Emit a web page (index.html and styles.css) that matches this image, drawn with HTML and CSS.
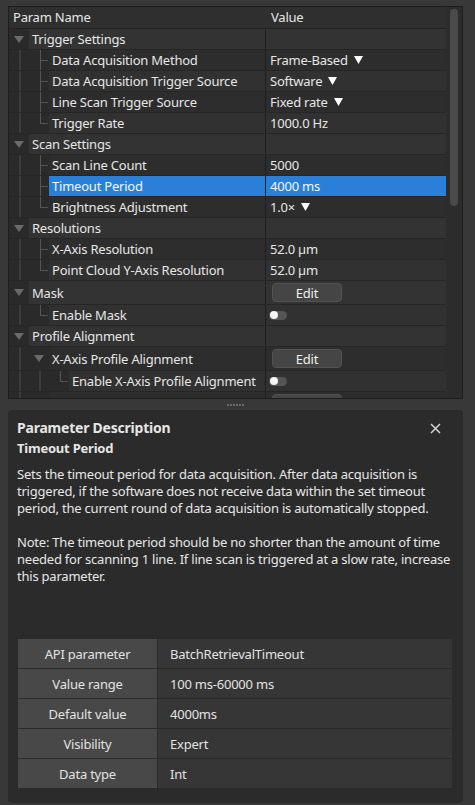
FILE: index.html
```html
<!DOCTYPE html>
<html>
<head>
<meta charset="utf-8">
<link rel="stylesheet" href="styles.css">
</head>
<body>
<div class="app">
  <div class="tree-frame">
    <div class="tree">
      <div class="hdr">
        <div class="hname">Param Name</div>
        <div class="hval">Value</div>
      </div>

      <div class="row parent">
        <div class="name"><span class="br arrow"><svg width="10" height="7" viewBox="0 0 10 7"><polygon points="0,0 10,0 5,7" fill="#6a6a6a"/></svg></span><span class="label">Trigger Settings</span></div>
        <div class="val"></div>
      </div>
      <div class="row child a">
        <div class="name"><span class="br line"></span><span class="br tee"></span><span class="label">Data Acquisition Method</span></div>
        <div class="val">Frame-Based<svg class="dd" width="9" height="8" viewBox="0 0 9 8"><polygon points="0,0 9,0 4.5,8" fill="#fff"/></svg></div>
      </div>
      <div class="row child b">
        <div class="name"><span class="br line"></span><span class="br tee"></span><span class="label">Data Acquisition Trigger Source</span></div>
        <div class="val">Software<svg class="dd" width="9" height="8" viewBox="0 0 9 8"><polygon points="0,0 9,0 4.5,8" fill="#fff"/></svg></div>
      </div>
      <div class="row child a">
        <div class="name"><span class="br line"></span><span class="br tee"></span><span class="label">Line Scan Trigger Source</span></div>
        <div class="val">Fixed rate<svg class="dd" width="9" height="8" viewBox="0 0 9 8"><polygon points="0,0 9,0 4.5,8" fill="#fff"/></svg></div>
      </div>
      <div class="row child b">
        <div class="name"><span class="br line"></span><span class="br corner"></span><span class="label">Trigger Rate</span></div>
        <div class="val">1000.0 Hz</div>
      </div>

      <div class="row parent">
        <div class="name"><span class="br arrow"><svg width="10" height="7" viewBox="0 0 10 7"><polygon points="0,0 10,0 5,7" fill="#6a6a6a"/></svg></span><span class="label">Scan Settings</span></div>
        <div class="val"></div>
      </div>
      <div class="row child a">
        <div class="name"><span class="br line"></span><span class="br tee"></span><span class="label">Scan Line Count</span></div>
        <div class="val">5000</div>
      </div>
      <div class="row child sel">
        <div class="name"><span class="br line"></span><span class="br tee"></span><span class="label">Timeout Period</span></div>
        <div class="val">4000 ms</div>
      </div>
      <div class="row child a">
        <div class="name"><span class="br line"></span><span class="br corner"></span><span class="label">Brightness Adjustment</span></div>
        <div class="val">1.0×<svg class="dd" width="9" height="8" viewBox="0 0 9 8"><polygon points="0,0 9,0 4.5,8" fill="#fff"/></svg></div>
      </div>

      <div class="row parent">
        <div class="name"><span class="br arrow"><svg width="10" height="7" viewBox="0 0 10 7"><polygon points="0,0 10,0 5,7" fill="#6a6a6a"/></svg></span><span class="label">Resolutions</span></div>
        <div class="val"></div>
      </div>
      <div class="row child a">
        <div class="name"><span class="br line"></span><span class="br tee"></span><span class="label">X-Axis Resolution</span></div>
        <div class="val">52.0 µm</div>
      </div>
      <div class="row child b">
        <div class="name"><span class="br line"></span><span class="br corner"></span><span class="label">Point Cloud Y-Axis Resolution</span></div>
        <div class="val">52.0 µm</div>
      </div>

      <div class="row parent tall">
        <div class="name"><span class="br arrow"><svg width="10" height="7" viewBox="0 0 10 7"><polygon points="0,0 10,0 5,7" fill="#6a6a6a"/></svg></span><span class="label">Mask</span></div>
        <div class="val"><span class="btn">Edit</span></div>
      </div>
      <div class="row child b">
        <div class="name"><span class="br line"></span><span class="br corner"></span><span class="label">Enable Mask</span></div>
        <div class="val"><span class="toggle"><span class="knob"></span></span></div>
      </div>

      <div class="row parent">
        <div class="name"><span class="br arrow"><svg width="10" height="7" viewBox="0 0 10 7"><polygon points="0,0 10,0 5,7" fill="#6a6a6a"/></svg></span><span class="label">Profile Alignment</span></div>
        <div class="val"></div>
      </div>
      <div class="row child a tall">
        <div class="name"><span class="br line"></span><span class="br arrow"><svg width="10" height="7" viewBox="0 0 10 7"><polygon points="0,0 10,0 5,7" fill="#6a6a6a"/></svg></span><span class="label">X-Axis Profile Alignment</span></div>
        <div class="val"><span class="btn">Edit</span></div>
      </div>
      <div class="row child b">
        <div class="name"><span class="br line"></span><span class="br line"></span><span class="br corner"></span><span class="label">Enable X-Axis Profile Alignment</span></div>
        <div class="val"><span class="toggle"><span class="knob"></span></span></div>
      </div>
      <div class="row child a tall">
        <div class="name"><span class="br line"></span><span class="br arrow"><svg width="10" height="7" viewBox="0 0 10 7"><polygon points="0,0 10,0 5,7" fill="#6a6a6a"/></svg></span><span class="label">Y-Axis Profile Alignment</span></div>
        <div class="val"><span class="btn">Edit</span></div>
      </div>
    </div>
    <div class="scrollbar"><div class="thumb"></div></div>
  </div>

  <div class="splitter"><span class="grip"></span></div>

  <div class="desc">
    <div class="desc-head">
      <span class="desc-title">Parameter Description</span>
      <svg class="close" width="11" height="11" viewBox="0 0 11 11"><path d="M1 1 L10 10 M10 1 L1 10" stroke="#d4d4d4" stroke-width="1.5" fill="none"/></svg>
    </div>
    <div class="desc-sub">Timeout Period</div>
    <p class="desc-text">Sets the timeout period for data acquisition. After data acquisition is triggered, if the software does not receive data within the set timeout period, the current round of data acquisition is automatically stopped.</p>
    <p class="desc-text">Note: The timeout period should be no shorter than the amount of time needed for scanning 1 line. If line scan is triggered at a slow rate, increase this parameter.</p>

    <div class="info">
      <div class="k">API parameter</div><div class="v">BatchRetrievalTimeout</div>
      <div class="k">Value range</div><div class="v">100 ms-60000 ms</div>
      <div class="k">Default value</div><div class="v">4000ms</div>
      <div class="k">Visibility</div><div class="v">Expert</div>
      <div class="k">Data type</div><div class="v">Int</div>
    </div>
  </div>
</div>
</body>
</html>
```

FILE: styles.css
```css
html, body {
  margin: 0;
  padding: 0;
  background: #383838;
}
body {
  font-family: "Noto Sans", "Open Sans", sans-serif;
  font-size: 13px;
  letter-spacing: -0.22px;
  color: #e6e6e6;
}
.app {
  box-sizing: border-box;
  width: 475px;
  height: 805px;
  padding: 6px 12px 2px 8px;
  display: flex;
  flex-direction: column;
}
.tree-frame {
  flex: none;
  height: 393px;
  box-sizing: border-box;
  border: 1px solid #1d1d1d;
  display: flex;
  background: #2a2a2a;
}
.tree {
  flex: 1;
  overflow: hidden;
  display: flex;
  flex-direction: column;
}
.hdr {
  flex: none;
  display: grid;
  grid-template-columns: 257px 1fr;
  height: 22px;
  box-sizing: border-box;
  border-bottom: 1px solid #222;
  background: #2f2f2f;
  line-height: 21px;
}
.hname { padding-left: 4px; }
.hval { padding-left: 5px; }

.row {
  flex: none;
  display: grid;
  grid-template-columns: 257px 1fr;
  height: 21px;
  box-sizing: border-box;
  border-bottom: 1px solid #262626;
}
.row.tall { height: 24px; }
.name {
  display: flex;
  box-sizing: border-box;
  border-right: 1px solid #1f1f1f;
  background: #2a2a2a;
  min-width: 0;
}
.label {
  flex: 1;
  padding-left: 3px;
  white-space: nowrap;
  overflow: hidden;
  display: flex;
  align-items: center;
}
.val {
  padding-left: 4px;
  display: flex;
  align-items: center;
  white-space: nowrap;
}
.parent .label, .parent .val { background: #333333; }
.child.a .label, .child.a .val { background: #2d2d2d; }
.child.b .label, .child.b .val { background: #313131; }
.child.sel .label, .child.sel .val { background: #2a80d8; color: #f2f6fb; }

.br {
  flex: none;
  width: 20px;
  height: 100%;
}
.br.arrow {
  display: flex;
  align-items: center;
  justify-content: center;
}
.br.line {
  background: linear-gradient(#3c3c3c, #3c3c3c) 10px 0 / 2px 100% no-repeat;
}
.br.tee {
  background:
    linear-gradient(#555, #555) 11px 0 / 1px 100% no-repeat,
    linear-gradient(#555, #555) 11px 10px / 8px 1px no-repeat;
}
.br.corner {
  background:
    linear-gradient(#555, #555) 11px 0 / 1px 11px no-repeat,
    linear-gradient(#555, #555) 11px 10px / 8px 1px no-repeat;
}
.dd { margin-left: 6px; }

.btn {
  margin-left: 2px;
  width: 70px;
  height: 19px;
  box-sizing: border-box;
  border: 1px solid #535353;
  border-radius: 4px;
  background: #454545;
  display: flex;
  align-items: center;
  justify-content: center;
  color: #eee;
}
.toggle {
  margin-left: -1px;
  width: 18px;
  height: 9px;
  border-radius: 5px;
  background: #555;
  display: flex;
  align-items: center;
  padding-left: 1px;
  box-sizing: border-box;
}
.knob {
  width: 8px;
  height: 8px;
  border-radius: 50%;
  background: #f4f4f4;
}

.scrollbar {
  flex: none;
  width: 16px;
  background: #2c2c2c;
  padding: 2px 4px 0 4px;
  box-sizing: border-box;
}
.thumb {
  width: 8px;
  height: 197px;
  border-radius: 4px;
  background: #4a4a4a;
}

.splitter {
  flex: none;
  height: 11px;
  display: flex;
  align-items: center;
  justify-content: center;
}
.grip {
  width: 17px;
  height: 2px;
  background: repeating-linear-gradient(90deg, #6a6a6a 0 2px, transparent 2px 3px);
}

.desc {
  flex: 1;
  background: #2b2b2b;
  border-radius: 4px;
  padding: 8px 11px 15px 9px;
  display: flex;
  flex-direction: column;
  min-height: 0;
}
.desc-head {
  display: flex;
  align-items: center;
  justify-content: space-between;
  padding-right: 11px;
}
.desc-title {
  font-weight: bold;
  font-size: 14px;
  line-height: 20px;
}
.desc-sub {
  font-weight: bold;
  font-size: 13px;
  line-height: 20px;
}
.desc-text {
  margin: 8px 0 17px 0;
  line-height: 17px;
}
.desc-text + .desc-text { margin-top: 0; }

.info {
  margin-top: auto;
  margin-left: 1px;
  display: grid;
  grid-template-columns: 139px 1fr;
  grid-auto-rows: 29px;
  gap: 1px;
  background: #2b2b2b;
}
.info .k {
  background: #484848;
  display: flex;
  align-items: center;
  justify-content: center;
  color: #e2e2e2;
}
.info .v {
  background: #363636;
  display: flex;
  align-items: center;
  padding-left: 12px;
  color: #e2e2e2;
}
```
